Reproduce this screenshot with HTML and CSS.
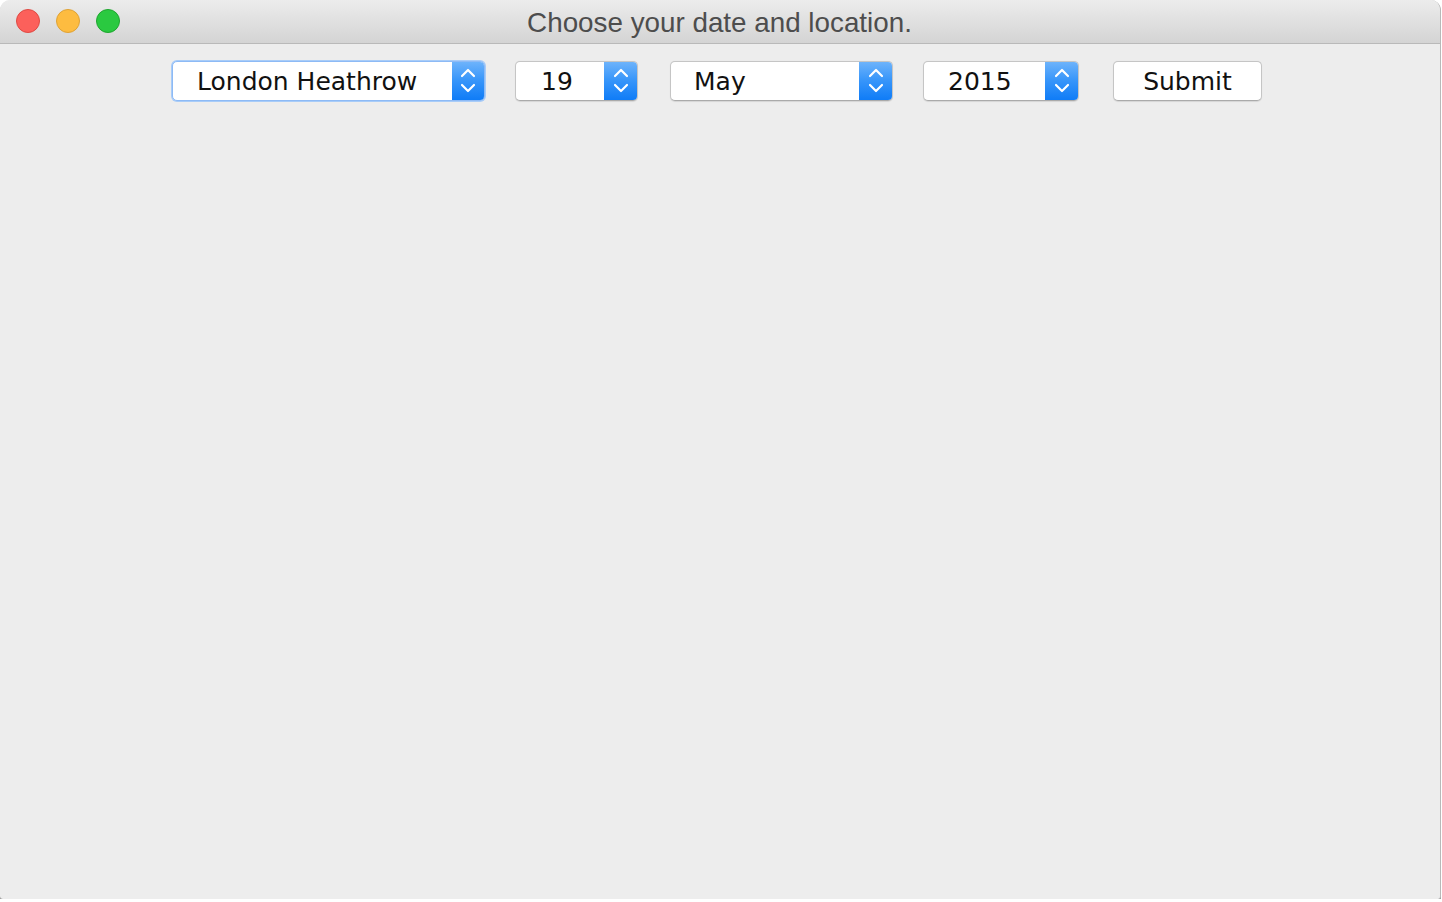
FILE: index.html
```html
<!DOCTYPE html>
<html>
<head>
<meta charset="utf-8">
<link rel="stylesheet" href="styles.css">
</head>
<body>
<div class="window">
  <div class="titlebar">
    <div class="lights">
      <span class="light red"></span>
      <span class="light yellow"></span>
      <span class="light green"></span>
    </div>
    <div class="title">Choose your date and location.</div>
  </div>
  <div class="content">
    <div class="toolbar">
      <div class="select focused w-loc">
        <span class="value">London Heathrow</span>
        <span class="stepper"><svg width="16" height="38" viewBox="0 0 16 38"><path d="M2 14 L8 8 L14 14" /><path d="M2 23 L8 29 L14 23" /></svg></span>
      </div>
      <div class="select w-day">
        <span class="value">19</span>
        <span class="stepper"><svg width="16" height="38" viewBox="0 0 16 38"><path d="M2 14 L8 8 L14 14" /><path d="M2 23 L8 29 L14 23" /></svg></span>
      </div>
      <div class="select w-month">
        <span class="value">May</span>
        <span class="stepper"><svg width="16" height="38" viewBox="0 0 16 38"><path d="M2 14 L8 8 L14 14" /><path d="M2 23 L8 29 L14 23" /></svg></span>
      </div>
      <div class="select w-year">
        <span class="value">2015</span>
        <span class="stepper"><svg width="16" height="38" viewBox="0 0 16 38"><path d="M2 14 L8 8 L14 14" /><path d="M2 23 L8 29 L14 23" /></svg></span>
      </div>
      <button class="button">Submit</button>
    </div>
  </div>
</div>
</body>
</html>
```
FILE: styles.css
```css
html, body {
  margin: 0;
  padding: 0;
  background: #ffffff;
}
.window {
  width: 1440px;
  height: 899px;
  background: #ededed;
  border-radius: 10px 10px 3px 3px;
  border-right: 1px solid #b8b8b8;
  box-shadow: 0 1px 0 #8a8a8a, 0 2px 0 #c8c8c8;
  overflow: hidden;
  display: flex;
  flex-direction: column;
}
.titlebar {
  height: 43px;
  border-bottom: 1px solid #b9b9b9;
  background: linear-gradient(#ececec, #d4d4d4);
  display: flex;
  align-items: center;
  position: relative;
}
.lights {
  display: flex;
  gap: 16px;
  padding-left: 16px;
  margin-top: -1px;
}
.light {
  width: 24px;
  height: 24px;
  border-radius: 50%;
  box-sizing: border-box;
}
.red { background: #fc605b; border: 1px solid #de4a43; }
.yellow { background: #fdbc40; border: 1px solid #dea236; }
.green { background: #2ac940; border: 1px solid #1fa52f; }
.title {
  position: absolute;
  left: 0;
  right: 0;
  top: 7px;
  text-align: center;
  font-family: "Liberation Sans", Arial, sans-serif;
  font-size: 27.8px;
  line-height: 32px;
  color: #4d4d4d;
  padding-right: 1px;
}
.content {
  flex: 1;
}
.toolbar {
  display: flex;
  align-items: center;
  padding-top: 17px;
  padding-left: 172px;
  font-family: "DejaVu Sans", sans-serif;
  font-size: 25px;
  color: #111;
}
.select {
  height: 40px;
  box-sizing: border-box;
  background: #fff;
  border: 1px solid #c5c5c5;
  border-bottom-color: #aaaaaa;
  border-radius: 5px;
  display: flex;
  align-items: center;
  overflow: hidden;
  box-shadow: 0 0.5px 1px rgba(0,0,0,0.1);
}
.select.focused {
  border-color: #8dbaf5;
  box-shadow: 0 0 0 1px #a8ccf8;
}
.value {
  flex: 1;
  padding-left: 24px;
  padding-top: 1px;
  line-height: 37px;
  white-space: nowrap;
}
.stepper {
  width: 33px;
  align-self: stretch;
  background: linear-gradient(#6db3fb, #3a97fa 45%, #0f7cf7);
  display: flex;
  align-items: center;
  justify-content: center;
}
.stepper svg path {
  fill: none;
  stroke: #fff;
  stroke-width: 2.2;
  stroke-linecap: round;
  stroke-linejoin: round;
}
.w-loc { width: 313px; }
.w-loc .stepper { width: 32px; }
.w-day { width: 123px; margin-left: 30px; }
.w-day .value { padding-left: 25px; }
.w-month { width: 223px; margin-left: 32px; }
.w-month .value { padding-left: 23px; }
.w-year { width: 156px; margin-left: 30px; }
.w-year .value { padding-left: 24px; }
.button {
  width: 149px;
  height: 40px;
  margin-left: 34px;
  background: #fff;
  border: 1px solid #c5c5c5;
  border-bottom-color: #aaaaaa;
  border-radius: 5px;
  font-family: "DejaVu Sans", sans-serif;
  font-size: 25px;
  color: #111;
  padding: 1px 0 0 0;
  box-shadow: 0 0.5px 1px rgba(0,0,0,0.1);
}
```
